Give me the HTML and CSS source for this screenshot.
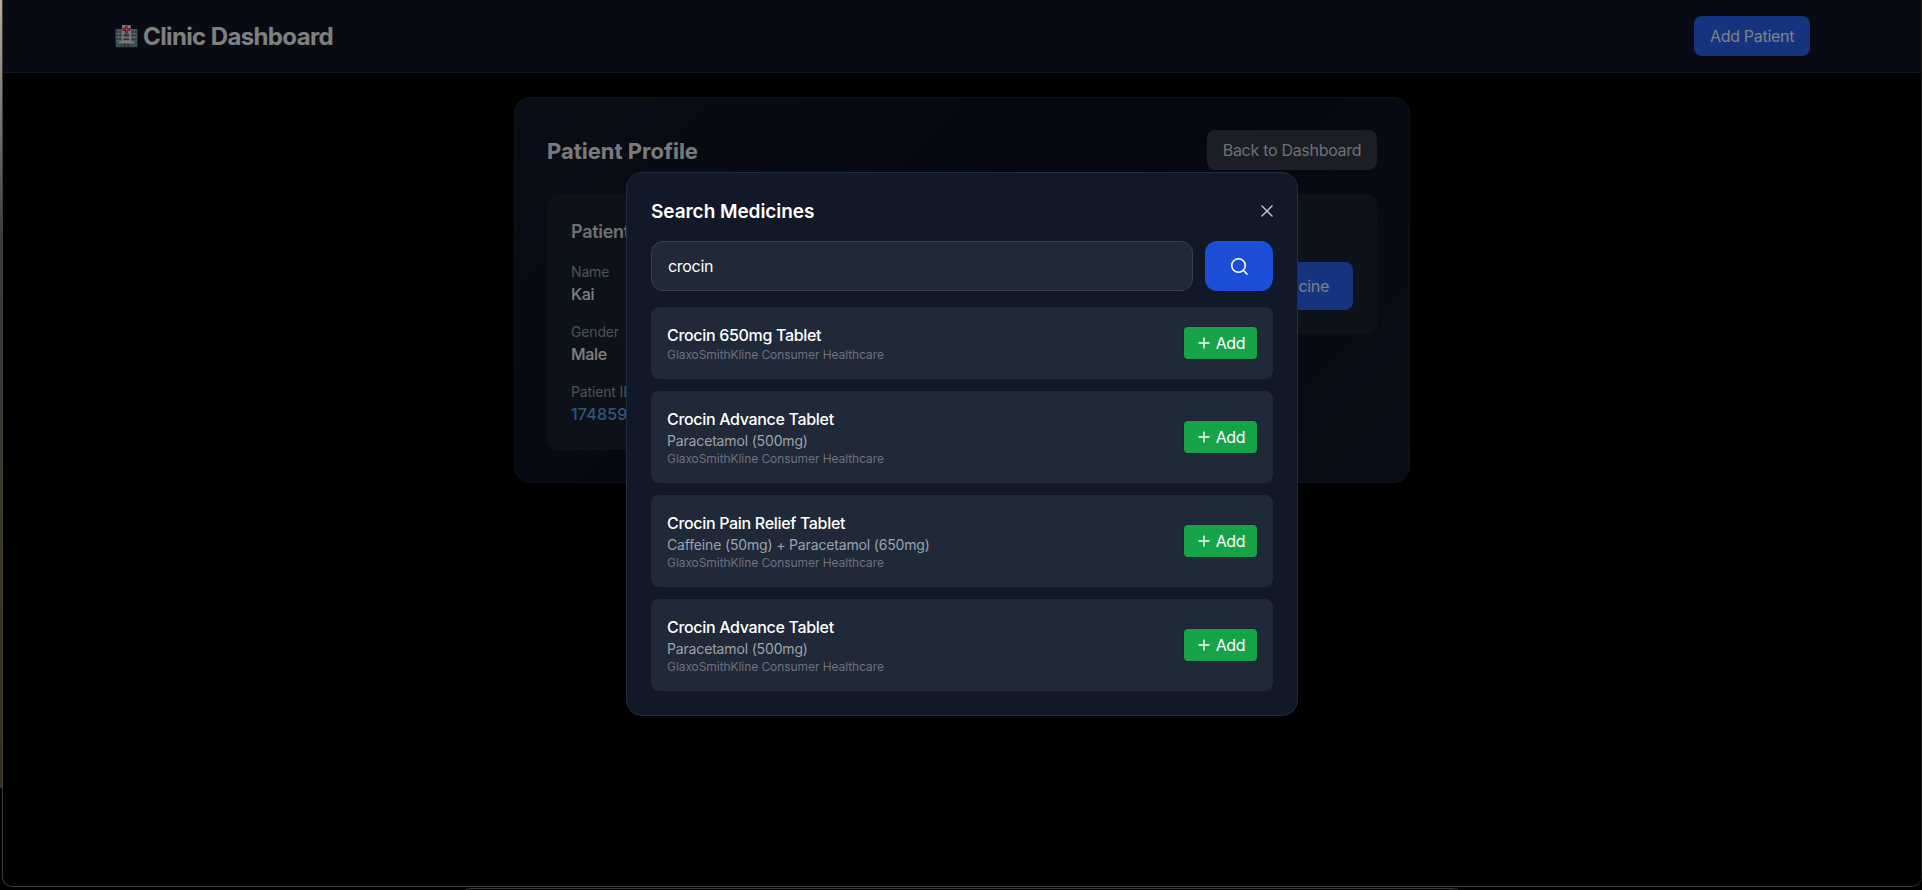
FILE: index.html
```html
<!DOCTYPE html>
<html lang="en">
<head>
<meta charset="utf-8">
<title>Clinic Dashboard</title>
<link rel="stylesheet" href="styles.css">
</head>
<body>
<div class="wallpaper"></div>
<div class="dock"></div>
<div class="window">
  <header class="navbar">
    <div class="brand"><span class="brand-icon">🏥</span><span>Clinic Dashboard</span></div>
    <button class="btn btn-primary nav-btn">Add Patient</button>
  </header>
  <main class="content">
    <section class="profile">
      <div class="profile-head">
        <h2>Patient Profile</h2>
        <button class="btn btn-back">Back to Dashboard</button>
      </div>
      <div class="profile-body">
        <div class="info-card">
          <h3>Patient Information</h3>
          <div class="field"><span class="label">Name</span><span class="value">Kai</span></div>
          <div class="field"><span class="label">Gender</span><span class="value">Male</span></div>
          <div class="field"><span class="label">Patient ID</span><span class="value link">1748591</span></div>
        </div>
        <div class="action-card"><button class="btn btn-primary add-med">Add Medicine</button></div>
      </div>
    </section>
  </main>
  <div class="overlay"></div>
  <div class="modal">
    <div class="modal-head">
      <h3>Search Medicines</h3>
      <svg class="close" viewBox="0 0 14 14" width="14" height="14"><path d="M1.5 1.5l11 11M12.5 1.5l-11 11"/></svg>
    </div>
    <div class="search-row">
      <div class="search-input">crocin</div>
      <button class="search-btn"><svg viewBox="0 0 20 20" width="20" height="20"><circle cx="9.5" cy="9.5" r="6.8"/><path d="M14.5 14.5l4 4"/></svg></button>
    </div>
    <div class="results">
      <div class="result">
        <div class="med"><div class="med-name">Crocin 650mg Tablet</div><div class="med-maker">GlaxoSmithKline Consumer Healthcare</div></div>
        <button class="add"><svg class="plus" viewBox="0 0 16 16" width="16" height="16"><path d="M2.5 8h11M8 2.5v11"/></svg>Add</button>
      </div>
      <div class="result">
        <div class="med"><div class="med-name">Crocin Advance Tablet</div><div class="med-salt">Paracetamol (500mg)</div><div class="med-maker">GlaxoSmithKline Consumer Healthcare</div></div>
        <button class="add"><svg class="plus" viewBox="0 0 16 16" width="16" height="16"><path d="M2.5 8h11M8 2.5v11"/></svg>Add</button>
      </div>
      <div class="result">
        <div class="med"><div class="med-name">Crocin Pain Relief Tablet</div><div class="med-salt">Caffeine (50mg) + Paracetamol (650mg)</div><div class="med-maker">GlaxoSmithKline Consumer Healthcare</div></div>
        <button class="add"><svg class="plus" viewBox="0 0 16 16" width="16" height="16"><path d="M2.5 8h11M8 2.5v11"/></svg>Add</button>
      </div>
      <div class="result">
        <div class="med"><div class="med-name">Crocin Advance Tablet</div><div class="med-salt">Paracetamol (500mg)</div><div class="med-maker">GlaxoSmithKline Consumer Healthcare</div></div>
        <button class="add"><svg class="plus" viewBox="0 0 16 16" width="16" height="16"><path d="M2.5 8h11M8 2.5v11"/></svg>Add</button>
      </div>
    </div>
  </div>
</div>
</body>
</html>
```
FILE: styles.css
```css
* { box-sizing: border-box; }
html, body { margin: 0; height: 100%; }
body { background: #000; font-family: Inter, "Liberation Sans", sans-serif; overflow: hidden; position: relative; }
h2, h3 { margin: 0; }
button { font-family: inherit; border: 0; cursor: pointer; }

.wallpaper { position: absolute; left: 0; top: 0; width: 2px; height: 788px; background: linear-gradient(#b9ae9a 0, #3b3a44 30%, #3f3518 75%, #3a3010 100%); }
.dock { position: absolute; left: 461px; top: 888px; width: 1002px; height: 12px; border: 1px solid #3a3a3a; border-radius: 10px 10px 0 0; }
.window { position: absolute; left: 2px; top: 0; right: 0; height: 887px; background: #000; border-bottom: 1px solid #3c3c3c; border-left: 1px solid #3c3c3c; border-right: 1px solid #1c1c1c; border-radius: 0 0 10px 10px; overflow: hidden; }

.navbar { height: 73px; padding: 0 111px; display: flex; align-items: center; justify-content: space-between; background: #101628; border-bottom: 1px solid #222f4e; }
.brand { display: flex; align-items: center; gap: 4px; font-size: 24px; font-weight: 700; color: #fff; letter-spacing: -0.62px; }
.brand-icon { font-size: 20px; letter-spacing: 0; }
.btn { height: 40px; border-radius: 8px; font-size: 16px; font-weight: 400; letter-spacing: -0.3px; }
.btn-primary { background: #2c66fe; color: #fff; }
.nav-btn { width: 116px; }

.content { padding: 24px 0 0; display: flex; justify-content: center; }
.profile { width: 896px; height: 386px; padding: 32px; background: linear-gradient(135deg, #121a2e, #0a101e 50%, #141a2e); border: 1px solid #1c2636; border-radius: 16px; }
.profile-head { display: flex; justify-content: space-between; align-items: center; height: 40px; margin-bottom: 24px; }
.profile-head h2 { font-size: 22px; font-weight: 700; color: #f5f5f5; padding-top: 2px; }
.btn-back { width: 170px; background: #363c48; color: #d8deea; }
.profile-body { display: flex; align-items: flex-start; }
.info-card { flex: 1; height: 256px; padding: 24px; background: #1b2431; border-radius: 12px 0 0 12px; }
.info-card h3 { font-size: 18px; line-height: 28px; font-weight: 600; letter-spacing: -0.3px; color: #dfe0e6; margin-bottom: 16px; }
.field { display: flex; flex-direction: column; margin-bottom: 16px; height: 44px; }
.label { font-size: 14px; line-height: 20px; letter-spacing: -0.15px; color: #9ca3af; }
.value { font-size: 16px; line-height: 24px; font-weight: 500; color: #fff; letter-spacing: -0.3px; }
.value.link { color: #5eaefc; letter-spacing: 0.2px; }
.action-card { width: 416px; height: 140px; background: #1b2431; border-radius: 0 12px 12px 0; padding: 68px 24px 0 0; display: flex; justify-content: flex-end; align-items: flex-start; }
.add-med { height: 48px; padding: 0 24px; }

.overlay { position: absolute; inset: 0; background: rgba(0, 0, 0, .5); pointer-events: none; }
.modal { position: absolute; left: 623px; top: 172px; width: 672px; height: 544px; padding: 24px; background: #111827; border: 1px solid #1f2d3d; border-radius: 16px; display: flex; flex-direction: column; }
.modal-head { display: flex; justify-content: space-between; align-items: center; height: 28px; margin-bottom: 16px; }
.modal-head h3 { font-size: 19px; font-weight: 600; line-height: 28px; color: #fff; padding-top: 1px; letter-spacing: -0.05px; }
.close { fill: none; stroke: #c9ced6; stroke-width: 1.3; margin-right: -1px; }
.search-row { display: flex; gap: 12px; height: 50px; margin-bottom: 16px; }
.search-input { flex: 1; padding: 0 16px; display: flex; align-items: center; font-size: 16px; letter-spacing: -0.3px; color: #fff; background: #1f2937; border: 1px solid #374151; border-radius: 12px; }
.search-btn { width: 68px; border-radius: 12px; background: #1d4ed8; display: flex; align-items: center; justify-content: center; }
.search-btn svg { fill: none; stroke: #fff; stroke-width: 1.6; }
.results { display: flex; flex-direction: column; gap: 12px; }
.result { display: flex; justify-content: space-between; align-items: center; padding: 16px; background: #1f2937; border-radius: 8px; }
.med-name { font-size: 16px; line-height: 24px; font-weight: 500; letter-spacing: -0.32px; color: #fff; }
.med-salt { font-size: 14px; line-height: 20px; letter-spacing: -0.16px; color: #9ca3af; }
.med-maker { font-size: 12px; line-height: 16px; letter-spacing: -0.07px; color: #6b7280; }
.add { width: 73px; height: 32px; border-radius: 4px; background: #16a34a; box-shadow: 0 0 0 1px rgba(0, 0, 0, .12); color: #fff; font-size: 16px; letter-spacing: -0.3px; display: flex; align-items: center; justify-content: center; gap: 4px; padding: 0; }
.plus { fill: none; stroke: #fff; stroke-width: 1.4; }
```
